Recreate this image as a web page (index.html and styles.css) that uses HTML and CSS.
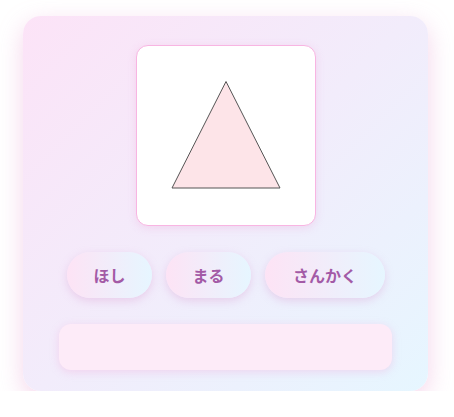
FILE: index.html
```html
<!DOCTYPE html>
<html lang="ja">
<head>
<meta charset="utf-8">
<link rel="stylesheet" href="styles.css">
</head>
<body>
<div class="card">
  <div class="picture">
    <svg width="180" height="181" viewBox="0 0 180 181">
      <polygon points="90,36.5 36,143 144,143" fill="#fde4e8" stroke="#555" stroke-width="1" stroke-linejoin="miter"/>
    </svg>
  </div>
  <div class="choices">
    <button class="choice w85">ほし</button>
    <button class="choice w85">まる</button>
    <button class="choice w120">さんかく</button>
  </div>
  <div class="answer"></div>
</div>
</body>
</html>
```
FILE: styles.css
```css
html, body {
  margin: 0;
  padding: 0;
  background: #ffffff;
}
body {
  font-family: "Noto Sans CJK JP", "Noto Sans", sans-serif;
  padding: 16px 0 0 23px;
}
.card {
  width: 405px;
  height: 375px;
  box-sizing: border-box;
  border-radius: 18px;
  background: linear-gradient(135deg, #fce3f7 0%, #f2ecfb 50%, #e6f6ff 100%);
  box-shadow: 0 8px 24px rgba(230, 150, 205, 0.4);
  padding-top: 29px;
  display: flex;
  flex-direction: column;
  align-items: center;
}
.picture {
  width: 180px;
  height: 181px;
  box-sizing: border-box;
  background: #ffffff;
  border: 1px solid #f8b5e2;
  border-radius: 12px;
  box-shadow: 0 2px 8px rgba(240, 160, 215, 0.3);
  display: flex;
  align-items: center;
  justify-content: center;
  overflow: hidden;
}
.picture svg {
  display: block;
  flex: none;
}
.choices {
  margin-top: 26px;
  display: flex;
  gap: 14px;
  padding-left: 1px;
}
.choice {
  height: 46px;
  border: none;
  border-radius: 23px;
  background: linear-gradient(90deg, #fde3f5 0%, #e6f6ff 100%);
  box-shadow: 0 3px 8px rgba(215, 150, 205, 0.35);
  color: #a35aa6;
  font-family: "Noto Sans CJK JP", "Noto Sans", sans-serif;
  font-weight: 700;
  font-size: 16px;
  padding: 0;
  cursor: pointer;
}
.w85 { width: 85px; }
.w120 { width: 120px; }
.answer {
  margin-top: 26px;
  width: 333px;
  height: 46px;
  border-radius: 12px;
  background: #fdebf8;
  box-shadow: 0 2px 8px rgba(240, 160, 215, 0.35);
}
```
